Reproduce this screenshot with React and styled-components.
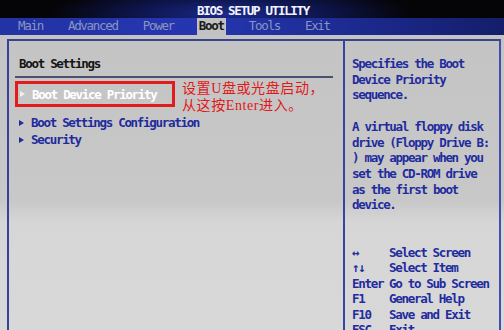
import styled, { createGlobalStyle } from 'styled-components'

const GlobalStyle = createGlobalStyle`
  html, body {
    margin: 0;
    padding: 0;
    background: #cbcbcb;
    overflow: hidden;
  }
`

const BIOS_FONT = `'DejaVu Sans Mono', 'Liberation Mono', monospace`

const Screen = styled.div`
  width: 504px;
  height: 330px;
  display: flex;
  flex-direction: column;
  overflow: hidden;
  font-family: ${BIOS_FONT};
  font-weight: bold;
  font-size: 12.5px;
  letter-spacing: -1.3px;
`

const TitleBar = styled.div`
  height: 21px;
  display: flex;
  align-items: center;
  justify-content: center;
  padding-left: 2px;
  background: radial-gradient(ellipse 180px 30px at 230px 14px, #1c2a8c 0%, #0d1448 55%, #050508 100%);
  color: #f4f4ff;
  font-size: 12.5px;
  padding-top: 3px;
  box-sizing: border-box;
`

const MenuBar = styled.div`
  height: 19px;
  display: flex;
  align-items: center;
  gap: 21px;
  padding-left: 16px;
  background: linear-gradient(90deg, #2233a6 0%, #2536b0 40%, #1c2a90 70%, #141e6a 100%);
`

const MenuItem = styled.span`
  padding: 1px 2px 2px;
  color: ${p => (p.active ? '#1a1a1a' : '#8a94c0')};
  background: ${p => (p.active ? '#c2c2c2' : 'transparent')};
  font-weight: ${p => (p.active ? 'bold' : 'normal')};
  line-height: 14px;
`

const Workspace = styled.div`
  flex: 1;
  padding: 4px 3px 0 7px;
  background: linear-gradient(180deg, #c4c4c4 0%, #c8c8c8 55%, #d6d6d6 62%, #d8d8d8 100%);
`

const Frame = styled.div`
  height: 100%;
  display: grid;
  grid-template-columns: 334px 1fr;
  border: 2px solid #3a4488;
  border-bottom: none;
  border-left-color: #38409a;
  border-right-color: #4050a8;
`

const LeftPanel = styled.div`
  padding: 16px 9px 0 6px;
`

const PanelHeading = styled.div`
  color: #141414;
  line-height: 14px;
  padding: 0 0 0 4px;
  height: 19px;
  border-bottom: 2px solid #4c5070;
  margin-right: 1px;
`

const ItemRow = styled.div`
  display: flex;
  align-items: flex-start;
  gap: 7px;
  margin-top: ${p => p.gap || 0}px;
`

const ItemBox = styled.div`
  width: 160px;
  height: 26px;
  box-sizing: border-box;
  border: ${p => (p.selected ? '3px solid #e01c1c' : '3px solid transparent')};
  display: flex;
  align-items: center;
  gap: 7px;
  padding-left: 1px;
  color: ${p => (p.selected ? '#ffffff' : '#1e2b9c')};
`

const PlainItem = styled.div`
  display: flex;
  align-items: center;
  gap: 7px;
  padding-left: 3px;
  height: 17px;
  color: #1e2b9c;
`

const Arrow = styled.span`
  width: 0;
  height: 0;
  border-top: 3.5px solid transparent;
  border-bottom: 3.5px solid transparent;
  border-left: 5px solid ${p => (p.light ? '#f0f0f0' : '#1e2b9c')};
  margin-left: 1px;
`

const Note = styled.div`
  color: #e01818;
  font-family: 'Liberation Serif', 'Noto Sans CJK SC', serif;
  font-weight: normal;
  font-size: 14px;
  letter-spacing: 0.6px;
  line-height: 17px;
  white-space: nowrap;
  margin-top: -1px;
`

const RightPanel = styled.div`
  border-left: 2px solid #3444a4;
  padding: 15px 4px 0 7px;
  color: #1f2c9e;
  line-height: 15.7px;
  white-space: pre;
`

const HelpText = styled.div`
  height: 189px;
`

const KeyRow = styled.div`
  display: grid;
  grid-template-columns: 37px 1fr;
  line-height: 15.4px;
`

const keys = [
  ['↔', 'Select Screen'],
  ['↑↓', 'Select Item'],
  ['Enter', 'Go to Sub Screen'],
  ['F1', 'General Help'],
  ['F10', 'Save and Exit'],
  ['ESC', 'Exit'],
]

export default function App() {
  return (
    <>
      <GlobalStyle />
      <Screen>
        <TitleBar>BIOS SETUP UTILITY</TitleBar>
        <MenuBar>
          <MenuItem>Main</MenuItem>
          <MenuItem>Advanced</MenuItem>
          <MenuItem>Power</MenuItem>
          <MenuItem active>Boot</MenuItem>
          <MenuItem>Tools</MenuItem>
          <MenuItem>Exit</MenuItem>
        </MenuBar>
        <Workspace>
          <Frame>
            <LeftPanel>
              <PanelHeading>Boot Settings</PanelHeading>
              <ItemRow gap={3}>
                <ItemBox selected>
                  <Arrow light />
                  Boot Device Priority
                </ItemBox>
                <Note>
                  设置U盘或光盘启动，
                  <br />
                  从这按Enter进入。
                </Note>
              </ItemRow>
              <ItemRow>
                <div>
                  <PlainItem>
                    <Arrow />
                    Boot Settings Configuration
                  </PlainItem>
                  <PlainItem>
                    <Arrow />
                    Security
                  </PlainItem>
                </div>
              </ItemRow>
            </LeftPanel>
            <RightPanel>
              <HelpText>
                {'Specifies the Boot\nDevice Priority\nsequence.\n\nA virtual floppy disk\ndrive (Floppy Drive B:\n) may appear when you\nset the CD-ROM drive\nas the first boot\ndevice.'}
              </HelpText>
              {keys.map(([k, d]) => (
                <KeyRow key={k}>
                  <span>{k}</span>
                  <span>{d}</span>
                </KeyRow>
              ))}
            </RightPanel>
          </Frame>
        </Workspace>
      </Screen>
    </>
  )
}
